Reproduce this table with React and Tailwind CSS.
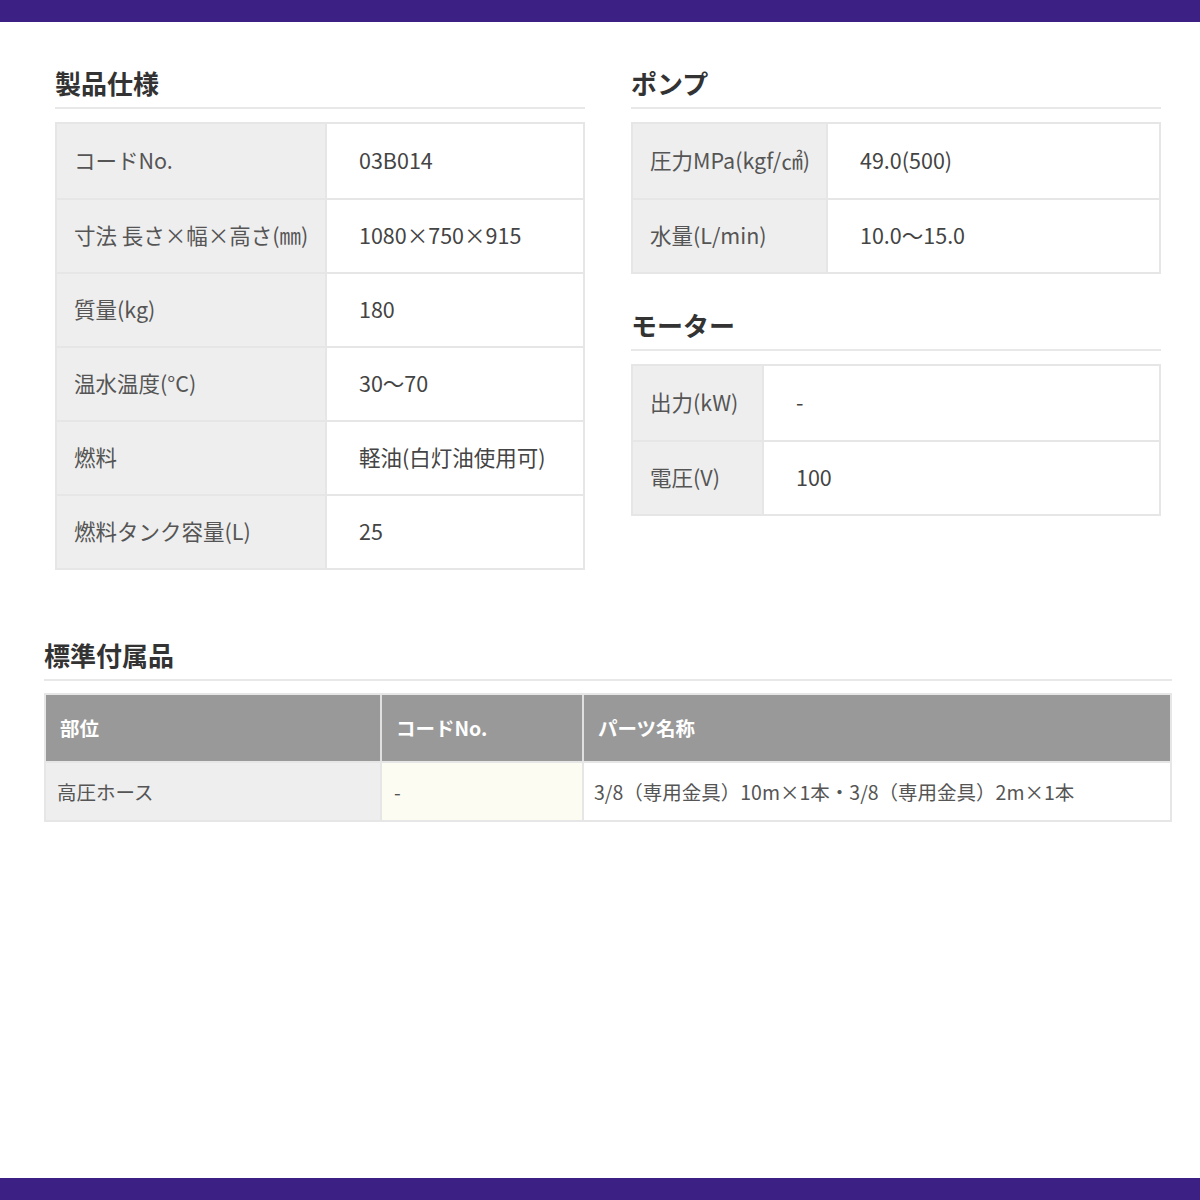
import React from "react";

const font = { fontFamily: '"Noto Sans CJK JP", "Noto Sans", sans-serif' };

function Heading({ children }) {
  return (
    <h2 className="text-[26px] font-bold leading-[36px] text-[#333333] pb-[6px] border-b-2 border-[#e8e8e8]">
      {children}
    </h2>
  );
}

function SpecTable({ rows, labelW }) {
  return (
    <div className="mt-[13px] border-2 border-[#e6e6e6]">
      {rows.map(([k, v], i) => (
        <div key={i} className={"flex h-[74px] " + (i > 0 ? "border-t-2 border-[#e6e6e6]" : "")}>
          <div
            className="flex items-center bg-[#eeeeee] border-r-2 border-[#e6e6e6] pl-[17px] pb-[2px] text-[21.5px] text-[#555555] shrink-0 whitespace-nowrap"
            style={{ width: labelW }}
          >
            {k}
          </div>
          <div className="flex items-center pl-[32px] pb-[2px] text-[21.5px] text-[#444444] whitespace-nowrap">{v}</div>
        </div>
      ))}
    </div>
  );
}

export default function App() {
  return (
    <div className="w-[1200px] h-[1200px] bg-white flex flex-col" style={font}>
      <div className="h-[22px] bg-[#3c2084] shrink-0" />
      <div className="flex-1">
        <div className="flex gap-[46px] pl-[55px] pt-[43px]">
          <div className="w-[530px]">
            <Heading>製品仕様</Heading>
            <SpecTable
              labelW={270}
              rows={[
                ["コードNo.", "03B014"],
                ["寸法 長さ×幅×高さ(㎜)", "1080×750×915"],
                ["質量(kg)", "180"],
                ["温水温度(°C)", "30〜70"],
                ["燃料", "軽油(白灯油使用可)"],
                ["燃料タンク容量(L)", "25"],
              ]}
            />
          </div>
          <div className="w-[530px]">
            <Heading>ポンプ</Heading>
            <SpecTable
              labelW={195}
              rows={[
                ["圧力MPa(kgf/㎠)", "49.0(500)"],
                ["水量(L/min)", "10.0〜15.0"],
              ]}
            />
            <div className="mt-[33px]">
              <Heading>モーター</Heading>
              <SpecTable
                labelW={131}
                rows={[
                  ["出力(kW)", "-"],
                  ["電圧(V)", "100"],
                ]}
              />
            </div>
          </div>
        </div>
        <div className="ml-[44px] w-[1128px] mt-[67px]">
          <Heading>標準付属品</Heading>
          <div className="mt-[12px] border-2 border-[#e6e6e6]">
            <div className="flex h-[66px] bg-[#999999] text-white font-bold text-[19.5px]">
              <div className="w-[336px] flex items-center pl-[14px] border-r-2 border-[#e0e0e0]">部位</div>
              <div className="w-[202px] flex items-center pl-[14px] border-r-2 border-[#e0e0e0]">コードNo.</div>
              <div className="flex-1 flex items-center pl-[14px]">パーツ名称</div>
            </div>
            <div className="flex h-[59px] text-[19.5px] text-[#555555] border-t-2 border-[#e6e6e6]">
              <div className="w-[336px] flex items-center pl-[11px] bg-[#eeeeee] border-r-2 border-[#e6e6e6]">高圧ホース</div>
              <div className="w-[202px] flex items-center pl-[12px] bg-[#fcfcf2] border-r-2 border-[#e6e6e6]">-</div>
              <div className="flex-1 flex items-center pl-[10px] bg-white">
                3/8（専用金具）10m×1本・3/8（専用金具）2m×1本
              </div>
            </div>
          </div>
        </div>
      </div>
      <div className="h-[22px] bg-[#3c2084] shrink-0" />
    </div>
  );
}
